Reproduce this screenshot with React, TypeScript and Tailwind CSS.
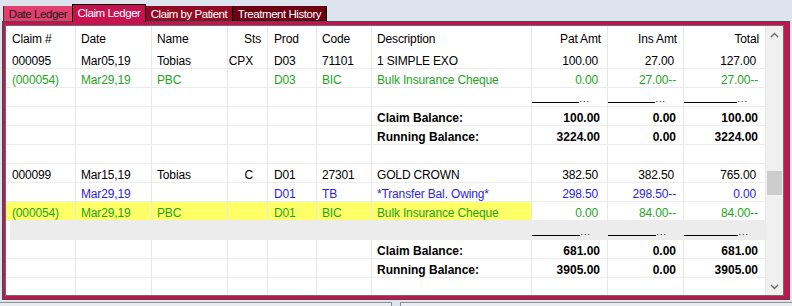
import React from "react";

type Row = {
  cells?: string[];
  tone?: "black" | "green" | "blue";
  bold?: boolean;
  highlight?: boolean;
  gray?: boolean;
  underline?: boolean;
};

const COLS = [
  { w: "w-[70px]", pl: "pl-[6px]" },
  { w: "w-[76px]", pl: "pl-[5px]" },
  { w: "w-[76px]", pl: "pl-[5px]" },
  { w: "w-[40px]", pl: "" },
  { w: "w-[49px]", pl: "pl-[6px]" },
  { w: "w-[55px]", pl: "pl-[5px]" },
  { w: "w-[160px]", pl: "pl-[5px]" },
  { w: "w-[76px]", pl: "" },
  { w: "w-[76px]", pl: "" },
  { w: "w-[82px]", pl: "" },
];

const HEADERS = ["Claim #", "Date", "Name", "Sts", "Prod", "Code", "Description", "Pat Amt", "Ins Amt", "Total"];

const ROWS: Row[] = [
  { cells: ["000095", "Mar05,19", "Tobias", "CPX", "D03", "71101", "1 SIMPLE EXO", "100.00", "27.00", "127.00"] },
  { cells: ["(000054)", "Mar29,19", "PBC", "", "D03", "BIC", "Bulk Insurance Cheque", "0.00", "27.00--", "27.00--"], tone: "green" },
  { underline: true },
  { cells: ["", "", "", "", "", "", "Claim Balance:", "100.00", "0.00", "100.00"], bold: true },
  { cells: ["", "", "", "", "", "", "Running Balance:", "3224.00", "0.00", "3224.00"], bold: true },
  {},
  { cells: ["000099", "Mar15,19", "Tobias", "C", "D01", "27301", "GOLD CROWN", "382.50", "382.50", "765.00"] },
  { cells: ["", "Mar29,19", "", "", "D01", "TB", "*Transfer Bal. Owing*", "298.50", "298.50--", "0.00"], tone: "blue" },
  { cells: ["(000054)", "Mar29,19", "PBC", "", "D01", "BIC", "Bulk Insurance Cheque", "0.00", "84.00--", "84.00--"], tone: "green", highlight: true },
  { underline: true, gray: true },
  { cells: ["", "", "", "", "", "", "Claim Balance:", "681.00", "0.00", "681.00"], bold: true },
  { cells: ["", "", "", "", "", "", "Running Balance:", "3905.00", "0.00", "3905.00"], bold: true },
  {},
];

const toneClass = {
  black: "text-black",
  green: "text-[#1ea51e]",
  blue: "text-[#2a1fe0]",
};

const lineWidths = ["w-[51px]", "w-[50px]", "w-[56px]"];

function Rule({ i }: { i: number }) {
  return (
    <span className="flex items-end h-[11px] pr-[8px]">
      <span className={`${lineWidths[i]} border-b border-black`} />
      <span className="text-[9px] leading-[9px] tracking-[1px] mb-[-1px]">...</span>
    </span>
  );
}

function Chevron({ up }: { up?: boolean }) {
  return (
    <svg width="9" height="6" viewBox="0 0 9 6">
      <polyline
        points={up ? "1,5 4.5,1.5 8,5" : "1,1 4.5,4.5 8,1"}
        fill="none"
        stroke="#6a6a6a"
        strokeWidth="1.4"
      />
    </svg>
  );
}

function Tabs() {
  return (
    <div className="relative z-10 flex items-end h-[21px] pl-[3px] text-[11.5px] tracking-[-0.45px]">
      <div className="w-[69px] h-[15px] flex items-center justify-center bg-[#e23f6e] text-[#1a1a1a] border-l border-[#5a2030]">
        Date Ledger
      </div>
      <div className="w-[74px] h-[18px] -mb-[1px] flex items-center justify-center bg-[#c8124f] text-white border border-b-0 border-black pb-[1px]">
        Claim Ledger
      </div>
      <div className="w-[87px] h-[15px] flex items-center justify-center bg-[#900b23] text-white border-r border-black">
        Claim by Patient
      </div>
      <div className="w-[94px] h-[15px] flex items-center justify-center bg-[#6b0012] text-white border-r border-black">
        Treatment History
      </div>
    </div>
  );
}

function DataRow({ row }: { row: Row }) {
  const tone = toneClass[row.tone ?? "black"];
  return (
    <div className={`flex h-[19px] shrink-0 ${row.gray ? "pl-[4px]" : ""}`}>
      <div className={`flex flex-1 ${row.gray ? "bg-[#ececec]" : "border-b border-[#ececec]"}`}>
        {COLS.map((c, i) => {
          const text = row.cells?.[i] ?? "";
          const amount = i >= 7;
          const yellow = row.highlight && i < 7;
          let pad = c.pl;
          if (i === 3) pad = "pr-[14px]";
          if (amount) pad = row.bold || text.endsWith("--") ? "pr-[7px]" : "pr-[9px]";
          return (
            <div
              key={i}
              className={`${i === 0 && row.gray ? "w-[66px]" : c.w} shrink-0 flex items-start pt-[4px] whitespace-nowrap overflow-hidden ${
                i === 3 || amount ? "justify-end" : ""
              } ${pad} ${row.gray ? "" : "border-r border-[#e8e8e8]"} ${yellow ? "bg-[#ffff66]" : ""} ${
                row.bold ? "font-bold text-black" : `${tone} tracking-[-0.15px]`
              }`}
            >
              {row.underline && amount ? <Rule i={i - 7} /> : text}
            </div>
          );
        })}
      </div>
    </div>
  );
}

export default function App() {
  return (
    <div className="w-[792px] h-[306px] overflow-hidden bg-[#dde4ed] text-[12px] leading-[14px] font-['Liberation_Sans',Arial,sans-serif]">
      <Tabs />
      <div className="ml-[2px] w-[788px] h-[279px] flex border border-[#4b4b4b] bg-[#c8124f] pt-[3px] pb-[3px] pl-[2px] pr-[5px]">
        <div className="flex flex-1 border border-[#6b6b6b] bg-white overflow-hidden">
          <div className="w-[760px] flex flex-col overflow-hidden">
            <div className="flex h-[24px] shrink-0">
              {HEADERS.map((h, i) => (
                <div
                  key={h}
                  className={`${COLS[i].w} shrink-0 flex items-center pt-[1px] border-r border-[#e8e8e8] tracking-[-0.15px] text-black ${
                    i === 3 || i >= 7 ? "justify-end pr-[6px]" : COLS[i].pl
                  }`}
                >
                  {h}
                </div>
              ))}
            </div>
            {ROWS.map((r, i) => (
              <DataRow key={i} row={r} />
            ))}
          </div>
          <div className="w-[17px] flex flex-col bg-[#f0f0f0]">
            <div className="h-[17px] flex items-center justify-center">
              <Chevron up />
            </div>
            <div className="flex-1 px-[1px]">
              <div className="mt-[128px] h-[24px] bg-[#cdcdcd]" />
            </div>
            <div className="h-[17px] flex items-center justify-center">
              <Chevron />
            </div>
          </div>
        </div>
      </div>
      <div className="flex mt-[2px] h-[6px]">
        <div className="w-[392px] border-t border-r border-[#8f8f8f] bg-[#e9edf2]" />
        <div className="w-[8px]" />
        <div className="flex-1 border-t border-l border-[#8f8f8f] bg-[#e9edf2]" />
      </div>
    </div>
  );
}
